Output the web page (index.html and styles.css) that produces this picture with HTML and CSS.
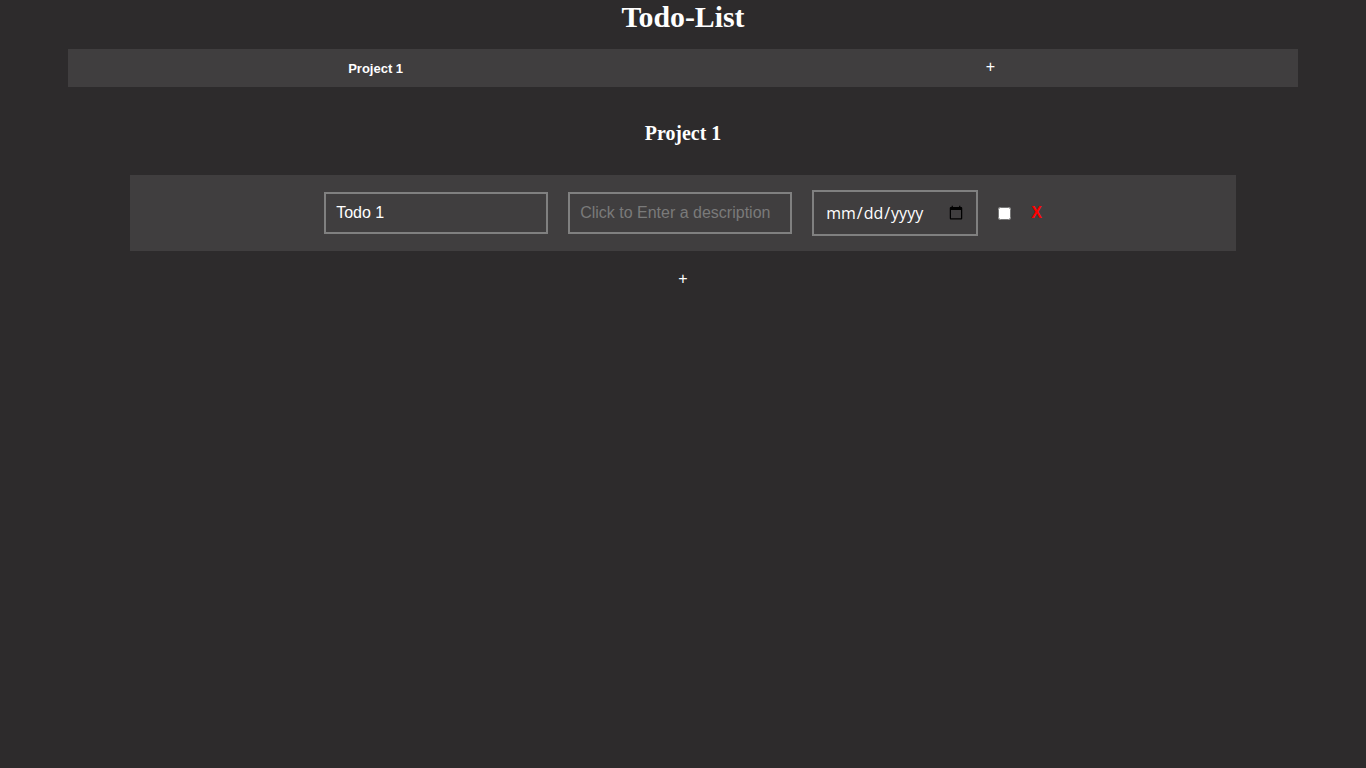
FILE: index.html
```html
<!DOCTYPE html>
<html lang="en">
<head>
<meta charset="utf-8">
<title>Todo-List</title>
<link rel="stylesheet" href="styles.css">
</head>
<body>
  <h1 class="title">Todo-List</h1>
  <div class="container">
    <nav class="projects">
      <button class="project-tab">Project 1</button>
      <button class="add-project">+</button>
    </nav>
    <h2 class="project-title">Project 1</h2>
    <div class="todo">
      <input class="field" type="text" value="Todo 1">
      <input class="field" type="text" placeholder="Click to Enter a description">
      <input class="date" type="date">
      <input class="check" type="checkbox">
      <button class="delete">X</button>
    </div>
    <div class="add-row">
      <button class="add-todo">+</button>
    </div>
  </div>
</body>
</html>
```
FILE: styles.css
```css
html, body {
  margin: 0;
  padding: 0;
  background: #2d2b2c;
  color: #ffffff;
}

body {
  font-family: "Liberation Serif", "Times New Roman", serif;
}

.title {
  margin: 0;
  font-size: 29.8px;
  font-weight: bold;
  text-align: center;
  line-height: 34px;
}

.container {
  width: 90%;
  margin: 15px auto 0;
}

.projects {
  display: flex;
  height: 38px;
  background: #403e3f;
  align-items: center;
}

.projects button {
  flex: 1;
  background: transparent;
  border: none;
  color: #ffffff;
  font-family: "Liberation Sans", Arial, sans-serif;
  padding: 0;
  cursor: pointer;
}

.project-tab {
  font-weight: bold;
  font-size: 13px;
}

.add-project {
  font-size: 16px;
  line-height: 18px;
  margin-bottom: 2px;
}

.project-title {
  margin: 35px 0 0;
  font-size: 19.9px;
  line-height: 23px;
  text-align: center;
  font-weight: bold;
}

.todo {
  width: 90%;
  margin: 30px auto 0;
  background: #403e3f;
  padding: 15px 0;
  display: flex;
  justify-content: center;
  align-items: center;
  gap: 20px;
}

.field {
  box-sizing: border-box;
  width: 224px;
  height: 42px;
  padding: 10px;
  border: 2px solid #808080;
  background: transparent;
  color: #ffffff;
  font-family: "Liberation Sans", Arial, sans-serif;
  font-size: 16px;
  line-height: 18px;
  outline: none;
  margin: 0;
}

.field::placeholder {
  color: #7a7a7a;
}

.date {
  box-sizing: border-box;
  width: 166px;
  height: 46px;
  padding: 10px 10px 10px 11px;
  border: 2px solid #808080;
  background: transparent;
  color: #ffffff;
  font-family: "Open Sans", sans-serif;
  font-size: 16px;
  margin: 0;
}

.check {
  width: 13px;
  height: 13px;
  margin: 0;
}

.delete {
  background: transparent;
  border: none;
  color: #ff0000;
  font-family: "Liberation Sans", Arial, sans-serif;
  font-weight: bold;
  font-size: 16px;
  padding: 0;
  margin: 0 0 1px;
  cursor: pointer;
}

.add-row {
  display: flex;
  justify-content: center;
  margin-top: 19px;
}

.add-todo {
  background: transparent;
  border: none;
  color: #ffffff;
  font-family: "Liberation Sans", Arial, sans-serif;
  font-size: 16px;
  line-height: 18px;
  padding: 0;
  cursor: pointer;
}
```
